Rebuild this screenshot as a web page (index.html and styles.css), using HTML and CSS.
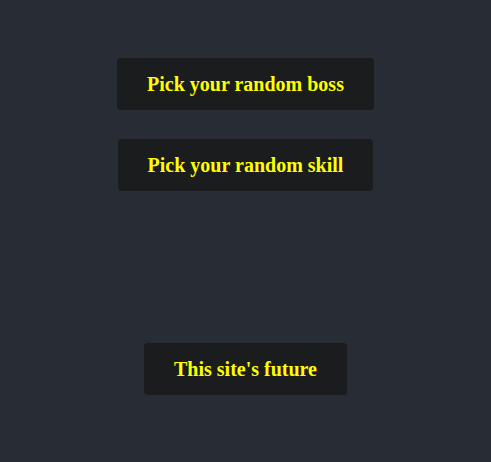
FILE: index.html
```html
<!DOCTYPE html>
<html>
<head>
<meta charset="utf-8">
<link rel="stylesheet" href="styles.css">
</head>
<body>
<div class="app">
  <div class="group">
    <button class="btn">Pick your random boss</button>
    <button class="btn">Pick your random skill</button>
  </div>
  <div class="footer">
    <button class="btn">This site's future</button>
  </div>
</div>
</body>
</html>
```
FILE: styles.css
```css
html, body {
  margin: 0;
  padding: 0;
  background: #282c34;
  height: 100%;
}
.app {
  display: flex;
  flex-direction: column;
  align-items: center;
  padding-top: 58px;
}
.group {
  display: flex;
  flex-direction: column;
  align-items: center;
  gap: 29px;
}
.footer {
  margin-top: 152px;
}
.btn {
  font-family: "Liberation Serif", "Times New Roman", serif;
  font-weight: bold;
  font-size: 20px;
  color: #ffff00;
  background: #1b1c1e;
  border: none;
  border-radius: 4px;
  padding: 15px 30px;
  height: 52px;
  line-height: 22px;
}
```
